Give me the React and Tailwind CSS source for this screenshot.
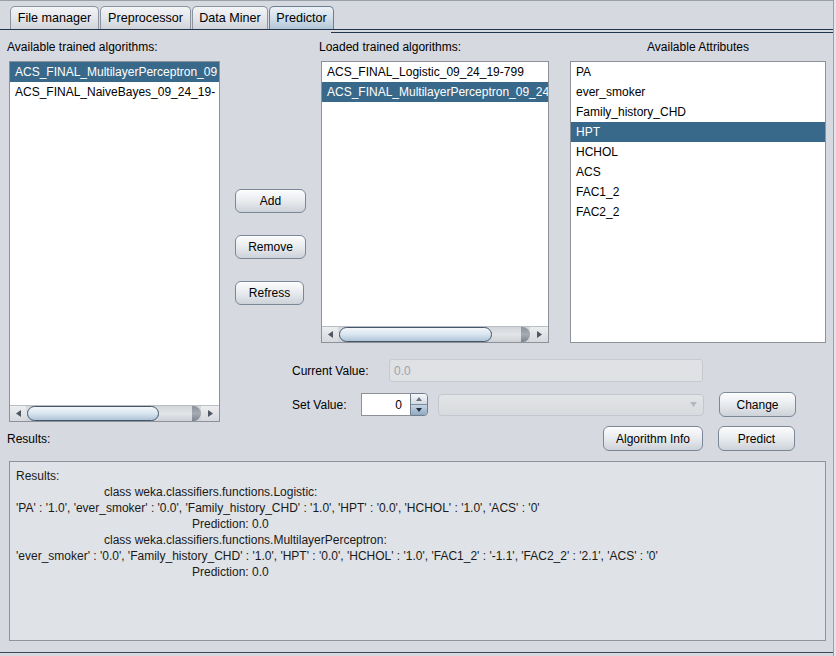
import React from "react";

const tabs = [
  { nombre: "File manager", ancho: "w-[89px]" },
  { nombre: "Preprocessor", ancho: "w-[91px]" },
  { nombre: "Data Miner", ancho: "w-[76px]" },
  { nombre: "Predictor", ancho: "w-[65px]", activo: true },
];

const disponibles = [
  "ACS_FINAL_MultilayerPerceptron_09",
  "ACS_FINAL_NaiveBayes_09_24_19-",
];

const cargados = [
  "ACS_FINAL_Logistic_09_24_19-799",
  "ACS_FINAL_MultilayerPerceptron_09_24",
];

const atributos = [
  "PA",
  "ever_smoker",
  "Family_history_CHD",
  "HPT",
  "HCHOL",
  "ACS",
  "FAC1_2",
  "FAC2_2",
];

function Flecha({ dir }) {
  const puntos = {
    left: "5,0 5,7 0,3.5",
    right: "0,0 0,7 5,3.5",
  };
  return (
    <svg width="5" height="7" viewBox="0 0 5 7">
      <polygon points={puntos[dir]} fill="#4e5763" />
    </svg>
  );
}

function BarraScroll({ thumb }) {
  return (
    <div className="flex h-[16px] border-t border-[#b9bec5] bg-gradient-to-b from-[#d2d5da] via-[#e2e4e7] to-[#cdd1d6]">
      <div className="flex w-[16px] items-center justify-center bg-gradient-to-b from-[#eceef0] to-[#d6d9dd]">
        <Flecha dir="left" />
      </div>
      <div className="flex flex-1 items-stretch">
        <div
          className={`ml-[1px] ${thumb} rounded-full border border-[#44566a] bg-gradient-to-b from-[#f3f7fa] via-[#d9e5ef] to-[#afc4d7]`}
        />
        <div className="flex-1" />
        <div className="w-[9px] rounded-r-full bg-gradient-to-b from-[#8b929b] via-[#a5abb3] to-[#7d848d]" />
      </div>
      <div className="flex w-[18px] items-center justify-center bg-gradient-to-b from-[#eceef0] to-[#d6d9dd]">
        <Flecha dir="right" />
      </div>
    </div>
  );
}

function Fila({ texto, seleccionada }) {
  return (
    <div
      className={`h-[20px] overflow-hidden whitespace-nowrap pl-[5px] leading-[20px] ${
        seleccionada ? "bg-[#39698a] text-white" : "text-black"
      }`}
    >
      {texto}
    </div>
  );
}

function Boton({ children, className }) {
  return (
    <button
      className={`flex items-center justify-center rounded-[6px] border border-[#7b8796] bg-gradient-to-b from-[#fcfcfd] via-[#e8ebee] to-[#cdd2d9] text-[12px] text-black shadow-[inset_0_1px_0_#ffffff] ${className}`}
    >
      {children}
    </button>
  );
}

export default function App() {
  return (
    <div className="h-[656px] w-[836px] overflow-hidden bg-[#e3e5e8] font-['Liberation_Sans','Arial',sans-serif] text-[12px] text-black">
      <div className="flex h-[656px] w-[834px] flex-col border-r border-t border-[#9aa0a8] bg-[#d6d9df]">
        {/* pestañas */}
        <div className="flex h-[29px] items-end border-b border-[#22354a] pl-[10px]">
          {tabs.map((tab) => (
            <div
              key={tab.nombre}
              className={`flex h-[23px] ${tab.ancho} items-center justify-center rounded-t-[5px] border border-b-0 text-[12.6px] ${
                tab.activo
                  ? "border-[#6d7e92] bg-gradient-to-b from-[#edf2f6] via-[#d3dfe9] to-[#b3c6d7]"
                  : "border-[#8a939f] bg-gradient-to-b from-[#f3f4f6] via-[#e3e6ea] to-[#d0d4da]"
              } ml-px first:ml-0`}
            >
              {tab.nombre}
            </div>
          ))}
        </div>
        <div className="flex h-[3px]">
          <div className="w-[331px]" />
          <div className="flex-1 border-b border-[#22354a]" />
        </div>

        <div className="flex">
          {/* columna izquierda */}
          <div className="flex w-[220px] flex-col">
            <div className="mt-[7px] h-[14px] pl-[7px] leading-[14px]">
              Available trained algorithms:
            </div>
            <div className="ml-[9px] mt-[7px] flex h-[361px] w-[211px] flex-col border border-[#8d9299] bg-white">
              <div className="flex-1 overflow-hidden">
                {disponibles.map((item, i) => (
                  <Fila key={item} texto={item} seleccionada={i === 0} />
                ))}
              </div>
              <BarraScroll thumb="w-[132px]" />
            </div>
            <div className="mt-[10px] h-[14px] pl-[7px] leading-[14px]">
              Results:
            </div>
          </div>

          {/* parte derecha */}
          <div className="flex w-[605px] flex-col">
            <div className="flex">
              <div className="ml-[15px] flex w-[70px] flex-col gap-[22px] pt-[156px]">
                <Boton className="h-[24px] w-[71px]">Add</Boton>
                <Boton className="h-[24px] w-[71px]">Remove</Boton>
                <Boton className="h-[24px] w-[69px]">Refress</Boton>
              </div>

              <div className="ml-[14px] flex w-[230px] flex-col">
                <div className="mt-[7px] h-[14px] leading-[14px]">
                  Loaded trained algorithms:
                </div>
                <div className="ml-[2px] mt-[7px] flex h-[282px] w-[228px] flex-col border border-[#8d9299] bg-white">
                  <div className="flex-1 overflow-hidden">
                    {cargados.map((item, i) => (
                      <Fila key={item} texto={item} seleccionada={i === 1} />
                    ))}
                  </div>
                  <BarraScroll thumb="w-[153px]" />
                </div>
              </div>

              <div className="ml-[21px] flex w-[256px] flex-col">
                <div className="mt-[7px] h-[14px] text-center leading-[14px]">
                  Available Attributes
                </div>
                <div className="mt-[7px] h-[282px] w-[256px] border border-[#8d9299] bg-white">
                  {atributos.map((item) => (
                    <Fila key={item} texto={item} seleccionada={item === "HPT"} />
                  ))}
                </div>
              </div>
            </div>

            {/* formulario */}
            <div className="mt-[16px] flex h-[23px] items-center pl-[72px]">
              <div className="w-[97px]">Current Value:</div>
              <div className="flex h-[23px] w-[314px] items-center rounded-[3px] border border-[#c6cad0] bg-[#dfe1e5] pl-[4px] text-[#9ea3ab]">
                0.0
              </div>
            </div>

            <div className="mt-[10px] flex h-[25px] items-center pl-[72px]">
              <div className="w-[69px]">Set Value:</div>
              <div className="flex h-[23px] w-[67px]">
                <div className="flex w-[49px] items-center justify-end border border-r-0 border-[#8d9299] bg-white pr-[8px]">
                  0
                </div>
                <div className="flex w-[18px] flex-col overflow-hidden rounded-r-[4px] border border-[#6f7d8d]">
                  <div className="flex flex-1 items-center justify-center bg-gradient-to-b from-[#f5f7f9] to-[#d3dae2]">
                    <svg width="6" height="4" viewBox="0 0 6 4">
                      <polygon points="0,4 6,4 3,0" fill="#6a7480" />
                    </svg>
                  </div>
                  <div className="flex flex-1 items-center justify-center border-t border-[#7d8d9f] bg-gradient-to-b from-[#c7d5e2] to-[#8fa9c2]">
                    <svg width="6" height="4" viewBox="0 0 6 4">
                      <polygon points="0,0 6,0 3,4" fill="#1f2d3c" />
                    </svg>
                  </div>
                </div>
              </div>
              <div className="ml-[10px] flex h-[22px] w-[266px] items-center justify-end rounded-[4px] border border-[#c4c8ce] bg-gradient-to-b from-[#e2e4e7] to-[#d8dbdf] pr-[6px]">
                <svg width="7" height="5" viewBox="0 0 7 5">
                  <polygon points="0,0 7,0 3.5,5" fill="#b4b9c0" />
                </svg>
              </div>
              <Boton className="ml-[15px] h-[25px] w-[77px]">Change</Boton>
            </div>

            <div className="mt-[9px] flex h-[25px] items-center pl-[383px]">
              <Boton className="h-[25px] w-[100px]">Algorithm Info</Boton>
              <Boton className="ml-[15px] h-[25px] w-[77px]">Predict</Boton>
            </div>
          </div>
        </div>

        {/* resultados */}
        <div className="ml-[9px] mt-[10px] h-[180px] w-[817px] border border-[#8f949b] bg-[#dfe2e6] pl-[6px] pt-[6px] leading-[16px] text-[#1a1a1a]">
          <div>Results:</div>
          <div className="pl-[88px]">class weka.classifiers.functions.Logistic:</div>
          <div>
            'PA' : '1.0', 'ever_smoker' : '0.0', 'Family_history_CHD' : '1.0', 'HPT' : '0.0', 'HCHOL' : '1.0', 'ACS' : '0'
          </div>
          <div className="pl-[176px]">Prediction: 0.0</div>
          <div className="pl-[88px]">class weka.classifiers.functions.MultilayerPerceptron:</div>
          <div>
            'ever_smoker' : '0.0', 'Family_history_CHD' : '1.0', 'HPT' : '0.0', 'HCHOL' : '1.0', 'FAC1_2' : '-1.1', 'FAC2_2' : '2.1', 'ACS' : '0'
          </div>
          <div className="pl-[176px]">Prediction: 0.0</div>
        </div>

        <div className="mt-[11px] border-b border-[#3c4756]" />
      </div>
    </div>
  );
}
